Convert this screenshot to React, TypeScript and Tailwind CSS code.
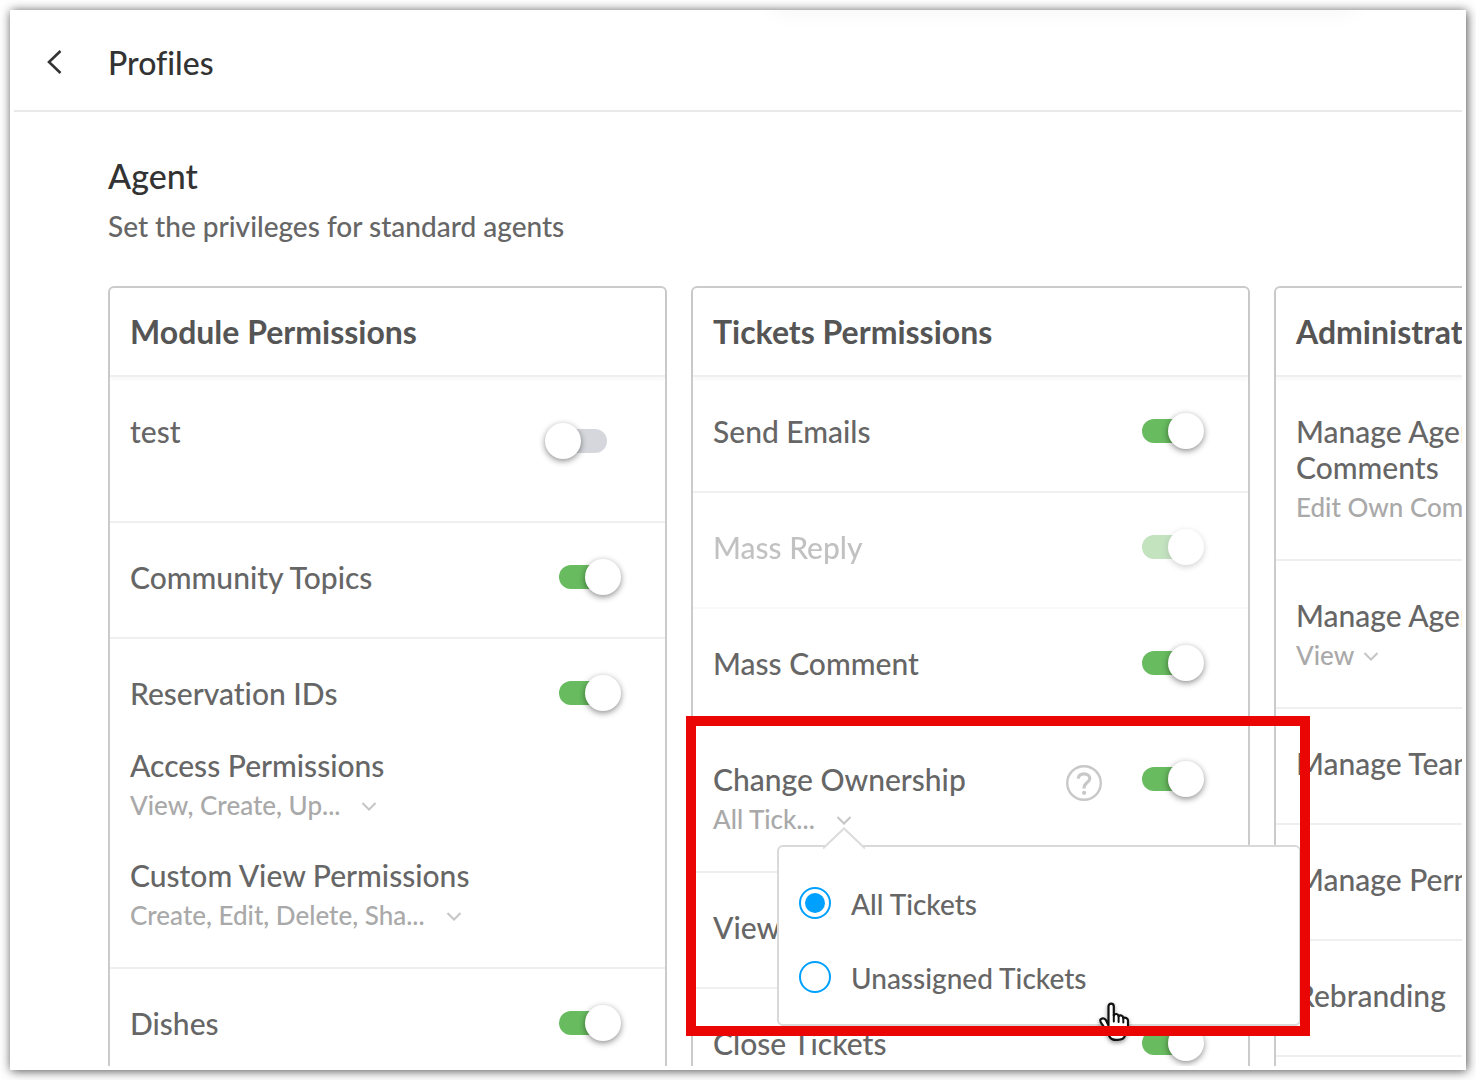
import React from 'react';

type Permission = {
  name: string;
  enabled: boolean;
  disabled?: boolean;
  summary?: string;
};

const ticketPermissionsTop: Permission[] = [
  { name: 'Send Emails', enabled: true },
  { name: 'Mass Reply', enabled: true, disabled: true },
  { name: 'Mass Comment', enabled: true },
];

const ticketPermissionsBottom: Permission[] = [
  { name: 'View', enabled: true },
  { name: 'Close Tickets', enabled: true },
];

const adminPermissions: Permission[] = [
  { name: 'Manage Agent\nComments', enabled: true, summary: 'Edit Own Comments' },
  { name: 'Manage Agents', enabled: true, summary: 'View' },
  { name: 'Manage Teams', enabled: true },
  { name: 'Manage Permissions', enabled: true },
  { name: 'Rebranding', enabled: true },
];

function Toggle({ label, enabled, disabled }: { label: string; enabled: boolean; disabled?: boolean }) {
  return (
    <input
      type="checkbox"
      role="switch"
      aria-label={label}
      defaultChecked={enabled}
      disabled={disabled}
      className="relative h-9 w-[62px] shrink-0 appearance-none before:absolute before:top-1.5 before:right-0 before:left-2 before:h-6 before:rounded-full before:bg-[#d6d7dc] after:absolute after:top-0 after:left-0 after:size-9 after:rounded-full after:bg-white after:shadow-[0_2px_6px_rgba(0,0,0,0.45)] checked:before:right-2 checked:before:left-0 checked:before:bg-[#68bb5f] checked:after:right-0 checked:after:left-auto"
    />
  );
}

// Grey line of granted rights with its drop-down arrow
function Summary({ text }: { text: string }) {
  const gap = text.endsWith('...') ? 'gap-[22px]' : 'gap-2.5';
  return (
    <button type="button" className={`mt-[9px] -mb-[3px] flex items-center text-[26px] leading-[26px] text-[#a9a9a9] ${gap}`}>
      <span>{text}</span>
      <svg viewBox="0 0 14 9" className="mt-0.5 h-[9px] w-3.5" fill="none" stroke="#c6c6c6" strokeWidth="2">
        <path d="M0.5 1L7 7.5L13.5 1" />
      </svg>
    </button>
  );
}

function Row({ permission }: { permission: Permission }) {
  const { name, enabled, disabled, summary } = permission;
  return (
    <li className={`flex items-start justify-between border-b-2 border-[#efefef] pt-9 pr-11 pb-[42px] pl-5 ${disabled ? 'opacity-40' : ''}`}>
      <div>
        <p className="whitespace-pre-line">{name}</p>
        {summary && <Summary text={summary} />}
      </div>
      <Toggle label={name} enabled={enabled} disabled={disabled} />
    </li>
  );
}

function Column({ title, children }: { title: string; children: React.ReactNode }) {
  return (
    <section className="w-[559px] shrink-0 rounded-md border-2 border-[#cbcbcb]">
      <h3 className="border-b-2 border-[#efefef] px-5 pt-[25px] pb-6 text-[32px] leading-[38px] font-bold text-[#555] shadow-[0_3px_4px_rgba(0,0,0,0.03)]">
        {title}
      </h3>
      <ul className="text-[30px] leading-9 text-[#666]">{children}</ul>
    </section>
  );
}

function HelpButton() {
  return (
    <button type="button" aria-label="Help" className="mt-1 shrink-0">
      <svg viewBox="0 0 36 36" className="size-9" fill="none" stroke="#c8c8c8" strokeWidth="2.4">
        <circle cx="18" cy="18" r="16.8" />
        <path d="M12.2 13.6C12.6 10.6 14.8 8.9 18 8.9C21.4 8.9 23.8 10.8 23.8 13.6C23.8 17.6 18.1 17.6 18.1 22.6V23.4" strokeWidth="3.2" />
        <circle cx="18.1" cy="27.8" r="2.1" fill="#c8c8c8" stroke="none" />
      </svg>
    </button>
  );
}

function RadioOption({ label, checked }: { label: string; checked?: boolean }) {
  return (
    <label className="flex items-center gap-5">
      <input
        type="radio"
        name="ownership"
        defaultChecked={checked}
        className="relative size-8 appearance-none rounded-full border-2 border-[#00a0ff] checked:after:absolute checked:after:inset-1 checked:after:rounded-full checked:after:bg-[#00a0ff]"
      />
      <span className="pt-0.5">{label}</span>
    </label>
  );
}

function OwnershipMenu() {
  return (
    <div className="absolute top-[120px] left-[84px] z-10 h-[181px] w-[524px] rounded-md border-2 border-[#d9d9d9] bg-white px-5 pt-[37px] text-[28px] leading-9">
      <svg viewBox="0 0 42 22" className="absolute -top-5 left-11 h-[22px] w-[42px]">
        <path d="M0 22L21 1.5L42 22Z" fill="#fff" />
        <path d="M0 21.5L21 1.5L42 21.5" fill="none" stroke="#dcdcdc" strokeWidth="2" />
      </svg>
      <div className="flex flex-col gap-9">
        <RadioOption label="All Tickets" checked />
        <RadioOption label="Unassigned Tickets" />
      </div>
    </div>
  );
}

function HandCursor() {
  return (
    <svg viewBox="0 0 32 40" className="absolute top-[277px] left-[406px] z-10 h-10 w-8 drop-shadow-[0_2px_2px_rgba(0,0,0,0.4)]">
      <path
        d="M9.5 23.5V4.5C9.5 0.8 14.8 0.8 14.8 4.5V13.5C15.8 11.2 19.3 11.6 19.6 14.2C21 12.6 24 13.4 24.3 16C26 15 29 16 29 18.6V25.5C29 29 26.5 31.5 25.8 34C24.5 38.8 12.5 39.5 10.5 34.5C8.5 30.5 6 28 4 23.5C2.6 21.4 0.2 19.4 1.6 17.4C3.4 15.2 6.6 16.6 7.4 19Z"
        fill="#fff"
        stroke="#111"
        strokeWidth="2.2"
        strokeLinejoin="round"
      />
      <path d="M14.8 13V19.5M19.6 14.5V20M24.3 16.5V20.5" fill="none" stroke="#111" strokeWidth="2" strokeLinecap="round" />
    </svg>
  );
}

export default function App() {
  return (
    <div className="h-screen bg-white p-2.5 font-['Lato',sans-serif] font-medium [font-variant-ligatures:none]">
      <div className="relative flex h-full flex-col overflow-hidden bg-white p-1 shadow-[1px_1px_10px_rgba(0,0,0,0.7)]">
        {/* Soft shade of the bar that sits above the page */}
        <div className="absolute right-28 bottom-full h-10 w-[580px] shadow-[0_0_24px_rgba(0,0,0,0.05)]" />
        <header className="flex h-[98px] shrink-0 items-center border-b-2 border-[#e9e9e9] pl-8">
          <button type="button" aria-label="Back" className="mr-[46px]">
            <svg viewBox="0 0 16 24" className="h-6 w-4" fill="none" stroke="#333" strokeWidth="2.6">
              <path d="M14.5 1L3 12L14.5 23" />
            </svg>
          </button>
          <h1 className="pt-0.5 text-[32px] leading-10 text-[#333]">Profiles</h1>
        </header>

        <main className="min-h-0 flex-1 overflow-hidden pt-[43px] pl-[94px]">
          <h2 className="text-[34px] leading-[42px] text-[#333]">Agent</h2>
          <p className="mt-[11px] text-[28px] leading-9 text-[#666]">Set the privileges for standard agents</p>

          <div className="mt-[42px] flex gap-6">
            <Column title="Module Permissions">
              <li className="flex items-start justify-between border-b-2 border-[#efefef] pt-9 pr-[58px] pb-[62px] pl-5">
                <p>test</p>
                <div className="flex pt-2.5">
                  <Toggle label="test" enabled={false} />
                </div>
              </li>
              <Row permission={{ name: 'Community Topics', enabled: true }} />
              <li className="border-b-2 border-[#efefef] pt-9 pr-11 pb-[42px] pl-5">
                <div className="flex items-start justify-between">
                  <p>Reservation IDs</p>
                  <Toggle label="Reservation IDs" enabled />
                </div>
                <div className="mt-9">
                  <p>Access Permissions</p>
                  <Summary text="View, Create, Up..." />
                </div>
                <div className="mt-[42px]">
                  <p>Custom View Permissions</p>
                  <Summary text="Create, Edit, Delete, Sha..." />
                </div>
              </li>
              <Row permission={{ name: 'Dishes', enabled: true }} />
            </Column>

            <Column title="Tickets Permissions">
              {ticketPermissionsTop.map((p) => (
                <Row key={p.name} permission={p} />
              ))}
              <li className="relative flex items-start border-b-2 border-[#efefef] pt-9 pr-11 pb-[42px] pl-5">
                <div className="flex-1">
                  <p>Change Ownership</p>
                  <Summary text="All Tick..." />
                </div>
                <HelpButton />
                <div className="ml-10 flex">
                  <Toggle label="Change Ownership" enabled />
                </div>
                <OwnershipMenu />
                <HandCursor />
                {/* Callout frame round the open menu */}
                <div className="pointer-events-none absolute -top-[9px] -left-[7px] z-20 h-80 w-[624px] border-10 border-[#eb0606]" />
              </li>
              {ticketPermissionsBottom.map((p) => (
                <Row key={p.name} permission={p} />
              ))}
            </Column>

            <Column title="Administration Permissions">
              {adminPermissions.map((p) => (
                <Row key={p.name} permission={p} />
              ))}
            </Column>
          </div>
        </main>
      </div>
    </div>
  );
}
